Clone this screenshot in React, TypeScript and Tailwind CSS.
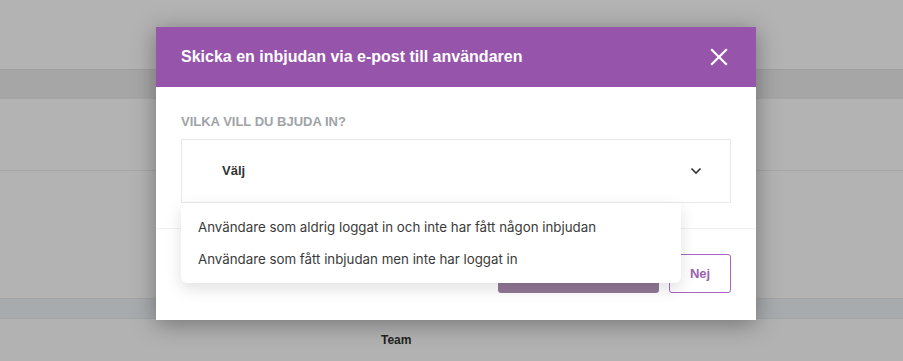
import React from "react";

export default function App() {
  return (
    <div className="relative w-[903px] h-[361px] overflow-hidden bg-[#b3b3b3] font-['Liberation_Sans',Arial,sans-serif]">
      {/* background page (dimmed) */}
      <div className="flex flex-col">
        <div className="h-[69px]" />
        <div className="h-[30px] bg-[#a6a6a6] border-t border-[#a0a0a0]" />
        <div className="h-[72px] border-b border-[#a8a8a8]" />
        <div className="h-[127px]" />
        <div className="h-[21px] bg-[#a8abae] border-y border-[#a2a5a8]" />
        <div className="h-[42px] bg-[#b1b2b1] flex items-center">
          <span className="ml-[381px] text-[12px] font-bold text-[#222]">Team</span>
        </div>
      </div>

      {/* modal */}
      <div className="absolute left-[156px] top-[27px] w-[600px] h-[293px] bg-white shadow-[0_4px_22px_rgba(0,0,0,0.35)] flex flex-col">
        <div className="h-[60px] bg-[#9655ab] flex items-center justify-between pl-[25px] pr-[28px]">
          <span className="text-white font-bold text-[16px]">Skicka en inbjudan via e-post till användaren</span>
          <svg width="18" height="18" viewBox="0 0 18 18" className="text-white">
            <path d="M2 2 L16 16 M16 2 L2 16" stroke="currentColor" strokeWidth="2.2" strokeLinecap="square" />
          </svg>
        </div>
        <div className="px-[25px] pt-[27px] pb-[25px] border-b border-[#eef1f1]">
          <div className="text-[13px] font-bold text-[#9ea3a8] leading-[16px]">VILKA VILL DU BJUDA IN?</div>
          <div className="mt-[9px] h-[64px] border border-[#e5e9ea] flex items-center justify-between pl-[40px] pr-[28px]">
            <span className="text-[13px] font-bold text-[#333]">Välj</span>
            <svg width="12" height="8" viewBox="0 0 12 8">
              <path d="M1.5 1.5 L6 6 L10.5 1.5" fill="none" stroke="#333" strokeWidth="1.6" />
            </svg>
          </div>
        </div>
        <div className="flex justify-end gap-[10px] px-[25px] pt-[25px]">
          <div className="w-[161px] h-[39px] rounded-[3px] bg-[#927896]" />
          <div className="w-[62px] h-[39px] rounded-[3px] border border-[#a765c0] flex items-center justify-center text-[13px] font-bold text-[#9c5fb5]">
            Nej
          </div>
        </div>
      </div>

      {/* dropdown menu */}
      <div className="absolute left-[181px] top-[203px] w-[500px] h-[80px] bg-white rounded-b-[6px] shadow-[0_6px_16px_rgba(0,0,0,0.12)] flex flex-col justify-center gap-[11px] px-[17px] pt-[1px] font-['Inter',sans-serif] text-[13.3px] text-[#3a3a3a]">
        <div className="leading-[21px]">Användare som aldrig loggat in och inte har fått någon inbjudan</div>
        <div className="leading-[21px]">Användare som fått inbjudan men inte har loggat in</div>
      </div>
    </div>
  );
}
